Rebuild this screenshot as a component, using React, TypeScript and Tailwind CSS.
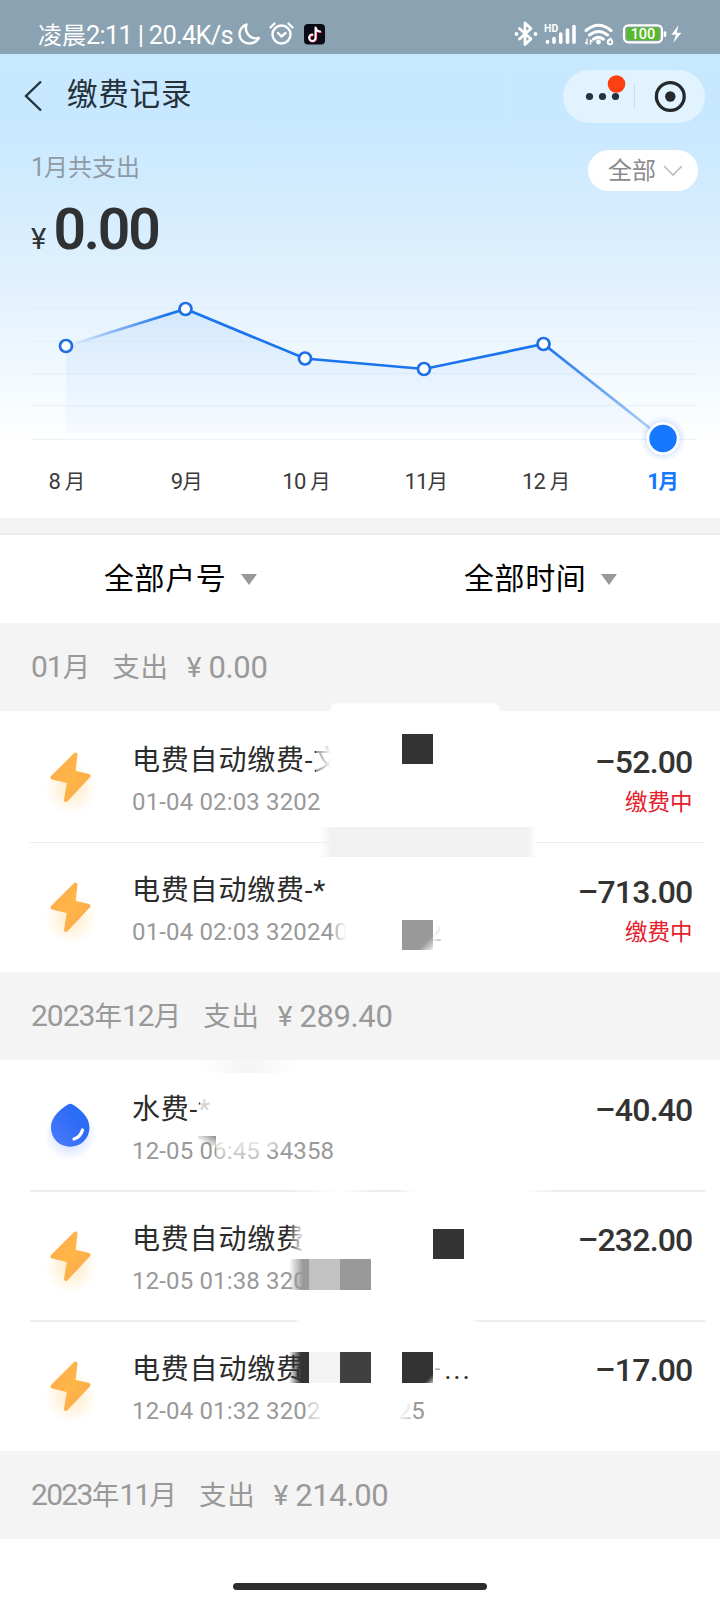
import type { ReactNode } from "react";

const CJK = "font-['Noto_Sans_CJK_SC',sans-serif]";

/** Sets Latin runs in Roboto and Chinese runs in the CJK face. */
function Mixed({ text, latin }: { text: string; latin: string }) {
  const runs = text.match(/[\u4e00-\u9fff]+|[^\u4e00-\u9fff]+/g) ?? [];
  return (
    <>
      {runs.map((run, i) =>
        /[\u4e00-\u9fff]/.test(run) ? (
          <span key={i}>{run}</span>
        ) : (
          <span key={i} className={`font-[Roboto,sans-serif] leading-none ${latin}`}>
            {run}
          </span>
        ),
      )}
    </>
  );
}

function StatusBar() {
  return (
    <div className="flex h-[54px] items-center bg-[#8aa2b1] pt-[14px] pl-[38px] text-white">
      <span className="w-[198px] text-[24px] leading-[30px] whitespace-nowrap">
        <Mixed text="凌晨2:11 | 20.4K/s" latin="text-[25.500px] tracking-[-0.750px]" />
      </span>
      <svg className="h-[26px] w-[94px]" viewBox="236 21 94 26" fill="none" stroke="white" strokeWidth="2.4" strokeLinecap="round" strokeLinejoin="round">
        <path d="M246.500 24.500c-10 3.500-9.500 18.500 3 19c4.500 0 7.500-2.200 9.500-5.500c-9.500 2-15-6-12.500-13.500z" />
        <circle cx="281.500" cy="34.500" r="9" />
        <path d="M278 33l3.500 3.500 4-3.500M270.500 27.500l4-4M292.500 27.500l-4-4" />
        <rect x="304" y="24" width="21" height="20.500" rx="4" fill="#0b0b17" stroke="none" />
        <path d="M315.500 27.500v10.300a3.200 3.200 0 1 1-3.200-3.200M315.500 27.500c.5 2.500 2 3.800 4.500 4" stroke="#f7335a" strokeWidth="2" transform="translate(.7 .6)" />
        <path d="M315.500 27.500v10.300a3.200 3.200 0 1 1-3.200-3.200M315.500 27.500c.5 2.500 2 3.800 4.500 4" strokeWidth="2" />
      </svg>
      <svg className="ml-[183px] h-[28px] w-[172px]" viewBox="513 20 172 28" fill="none" stroke="white" strokeLinecap="round" strokeLinejoin="round">
        <path d="M519.500 28.500l11.500 10.500-6 5.500v-21.500l6 5.500-11.500 10.500" strokeWidth="2.800" />
        <circle cx="516.500" cy="34" r="1.900" fill="white" stroke="none" />
        <circle cx="535.500" cy="34" r="1.900" fill="white" stroke="none" />
        <text x="544" y="31.500" fontSize="10.500" fontWeight="700" fontFamily="Roboto" fill="white" stroke="none">HD</text>
        <path d="M547.500 41.500v.8M554 38.500v3.800M560.700 34v8.300M567.500 30v12.300M574 26.500v15.800" strokeWidth="3.600" />
        <path d="M586 30.500q12.500-10.500 25 0M589.500 35q9-7 18 0M593.500 39.200q5-3.700 10 0" strokeWidth="3" />
        <circle cx="598.500" cy="42" r="2.400" fill="white" stroke="none" />
        <path d="M587 39v5l-1.500-1.500M590.500 44v-4l1.500 1.500" strokeWidth="1.400" />
        <path d="M610.500 38.500q-2.500 2-2.500 3.700" strokeWidth="2" />
        <circle cx="610" cy="42" r="2.300" strokeWidth="1.800" />
        <rect x="624" y="25.300" width="38" height="17" rx="4.500" strokeWidth="2.200" />
        <rect x="626.500" y="27.500" width="33" height="12.700" rx="2" fill="#57b82c" stroke="none" />
        <text x="643" y="39" fontSize="14.500" fontWeight="500" textAnchor="middle" fontFamily="Roboto" fill="white" stroke="none">100</text>
        <path d="M665 32.500v3.200" strokeWidth="2.500" />
        <path d="M678.500 25l-7 9.700h4.500l-3 8.300 8.500-10.300h-4.700z" fill="white" stroke="none" />
      </svg>
    </div>
  );
}

function NavBar() {
  return (
    <div className="flex h-[76px] items-center pl-[22px]">
      <svg className="mt-[7px] h-8 w-6" viewBox="0 0 24 32" fill="none" stroke="#26323a" strokeWidth="2.400">
        <path d="M19 1.500L4 16l15 14.500" />
      </svg>
      <h1 className="ml-[21px] w-[496px] text-[30.600px] leading-[40px] tracking-[0.700px] text-[#26323a]">缴费记录</h1>
      <div className="mt-[8px] flex h-[53px] w-[142px] items-center rounded-full bg-[#e1f3ff]">
        <svg className="h-[53px] w-[142px]" viewBox="563 69.500 142 53">
          <circle cx="589.500" cy="96" r="3.600" fill="#26323a" />
          <circle cx="602.500" cy="96" r="3.600" fill="#26323a" />
          <circle cx="616.500" cy="83.500" r="8.800" fill="#ff4013" />
          <circle cx="615.500" cy="96" r="3.600" fill="#26323a" />
          <path d="M634.500 82v27" stroke="#cfe0ea" />
          <circle cx="670.300" cy="96" r="13.900" fill="none" stroke="#26292c" strokeWidth="3.300" />
          <circle cx="670.300" cy="96" r="5.200" fill="#26292c" />
        </svg>
      </div>
    </div>
  );
}

const points = [
  [66, 346],
  [185.5, 309],
  [305, 358.5],
  [424, 369],
  [543.5, 344],
  [663, 438.5],
];
const months = ["8 月", "9月", "10 月", "11月", "12 月", "1月"];

function Chart() {
  const line = points.map(([x, y]) => `${x},${y}`).join(" ");
  return (
    <>
      <svg className="block h-[173px] w-[720px]" viewBox="0 290 720 173">
        <defs>
          <linearGradient id="stroke" gradientUnits="userSpaceOnUse" x1="66" y1="0" x2="663" y2="0">
            <stop offset="0.01" stopColor="#1a6fe8" stopOpacity="0" />
            <stop offset="0.170" stopColor="#1a74ee" />
            <stop offset="0.800" stopColor="#1a74ee" />
            <stop offset="1" stopColor="#1a74ee" stopOpacity="0.250" />
          </linearGradient>
          <linearGradient id="area" x1="0" y1="0" x2="0" y2="1">
            <stop offset="0" stopColor="#1677ff" stopOpacity="0.085" />
            <stop offset="1" stopColor="#1677ff" stopOpacity="0.025" />
          </linearGradient>
        </defs>
        {[308.5, 341.5, 373.5, 405.5, 439.5].map((y) => (
          <path key={y} d={`M32 ${y}H696`} stroke="#dfe8f0" strokeOpacity="0.550" />
        ))}
        <polygon points="66,433 66,346 185.5,309 305,358.5 424,369 543.5,344 656,433" fill="url(#area)" />
        <polyline points={line} fill="none" stroke="url(#stroke)" strokeWidth="2.700" />
        {points.slice(0, 5).map(([x, y]) => (
          <circle key={x} cx={x} cy={y} r="6" fill="white" stroke="#1f6fe5" strokeWidth="2.700" />
        ))}
        <circle cx="663" cy="438.500" r="22" fill="#1677ff" fillOpacity="0.050" />
        <circle cx="663" cy="438.500" r="19" fill="#1677ff" fillOpacity="0.070" />
        <circle cx="663" cy="438.500" r="16.500" fill="white" />
        <circle cx="663" cy="438.500" r="13.700" fill="#1677ff" />
      </svg>
      <div className="flex h-[55px] w-[720px] pl-[7px] text-[20.500px] leading-[34px] text-[#3a3a3a]">
        {months.map((m, i) => (
          <div key={m} className={i === 5 ? "w-[114px] text-center font-bold text-[#1677ff]" : "w-[119.800px] text-center"}>
            <Mixed text={m} latin={i === 5 ? "text-[22px] font-bold tracking-[-1.500px]" : "text-[22px] tracking-[-0.800px]"} />
          </div>
        ))}
      </div>
    </>
  );
}

function Summary() {
  return (
    <div className="h-[160px]">
      <div className="flex h-[64px] items-start justify-between pr-[22px] pl-[31px]">
        <span className="mt-[18px] text-[24px] leading-[36px] text-[#8f9ba4]">
          <Mixed text="1月共支出" latin="text-[25px] tracking-[-1px]" />
        </span>
        <div className="mt-[20px] flex h-[41px] w-[110px] items-center rounded-full bg-white pl-[20px]">
          <span className="mt-[-3px] text-[24px] leading-[36px] text-[#8a8a8a]">全部</span>
          <svg className="ml-[7px] h-3 w-5" viewBox="0 0 20 12" fill="none" stroke="#bdbdbd" strokeWidth="1.600">
            <path d="M1 1l9 9 9-9" />
          </svg>
        </div>
      </div>
      <div className="flex items-baseline pt-px pl-[31px] font-[Roboto,sans-serif] text-[#2f3133]">
        <span className="w-[22.500px] text-[29px]">¥</span>
        <span className="text-[57px] leading-[69px] font-semibold tracking-[-2.200px]">0.00</span>
      </div>
    </div>
  );
}

function Filter({ label }: { label: string }) {
  return (
    <div className="flex flex-1 items-center pl-[104px]">
      <span className="mt-[-6px] text-[30px] leading-[44px] tracking-[0.600px] text-black">{label}</span>
      <svg className="ml-[14.500px] h-[11px] w-4" viewBox="0 0 16 11">
        <path d="M0 0h16l-8 11z" fill="#999" />
      </svg>
    </div>
  );
}

function GroupHeader({ month, total, narrow }: { month: string; total: string; narrow?: boolean }) {
  return (
    <div className="flex h-[88px] items-center bg-[#f4f4f4] pl-[31px] text-[27.500px] leading-[44px] text-[#999]">
      <span className="-mt-[4px]">
        <Mixed text={month} latin={narrow ? "text-[30px] tracking-[-1.700px]" : "text-[30px] tracking-[-1px]"} />
      </span>
      <span className="-mt-[4px] ml-[22px] tracking-[0.800px]">支出</span>
      <span className="mt-px ml-[18px] font-[Roboto,sans-serif] text-[28px]">¥</span>
      <span className="mt-px ml-[7px] font-[Roboto,sans-serif] text-[31px] tracking-[-0.400px]">{total}</span>
    </div>
  );
}

function Bolt() {
  return (
    <svg className="h-[76px] w-[70px]" viewBox="35 742 70 76">
      <defs>
        <linearGradient id="bolt" x1="0" y1="0" x2="1" y2="1">
          <stop offset="0" stopColor="#ffa94d" />
          <stop offset="0.500" stopColor="#ffb648" />
          <stop offset="1" stopColor="#f9a54c" />
        </linearGradient>
        <radialGradient id="glow">
          <stop offset="0" stopColor="#ffc050" stopOpacity="0.350" />
          <stop offset="1" stopColor="#ffc050" stopOpacity="0" />
        </radialGradient>
      </defs>
      <circle cx="71" cy="788" r="26" fill="url(#glow)" />
      <path d="M75.500 754.500L52.500 777.500 69 781.500 66 800 88.500 776 73.500 772.500z" fill="url(#bolt)" stroke="url(#bolt)" strokeWidth="4" strokeLinejoin="round" />
    </svg>
  );
}

function Drop() {
  return (
    <svg className="h-[76px] w-[70px]" viewBox="35 1091 70 76">
      <defs>
        <linearGradient id="drop" x1="0" y1="1" x2="1" y2="0">
          <stop offset="0" stopColor="#4d7dff" />
          <stop offset="0.600" stopColor="#2f6cf6" />
          <stop offset="1" stopColor="#1f6dfb" />
        </linearGradient>
        <radialGradient id="dropGlow">
          <stop offset="0" stopColor="#4d7dff" stopOpacity="0.350" />
          <stop offset="1" stopColor="#4d7dff" stopOpacity="0" />
        </radialGradient>
      </defs>
      <circle cx="70" cy="1135" r="26" fill="url(#dropGlow)" />
      <path d="M68 1104.500q2.300-1.500 4.600 0C80 1109 89.500 1117 89.500 1127.500a19.300 19.300 0 0 1-38.600 0C51 1117 60.500 1109 68 1104.500z" fill="url(#drop)" />
      <path d="M82.500 1130q-2 7-8.500 9" fill="none" stroke="white" strokeWidth="3.200" strokeLinecap="round" />
    </svg>
  );
}

type RowProps = { icon: ReactNode; title: string; sub: ReactNode; amount: string; pending?: boolean; divider?: string; tail?: ReactNode };

function Row({ icon, title, sub, amount, pending, divider, tail }: RowProps) {
  return (
    <div className="relative flex h-[130px] pl-[35px]">
      <div className="mt-[30px]">{icon}</div>
      <div className="ml-[27px] flex-1 whitespace-nowrap">
        <div className="mt-[25px] h-[42px] text-[28px] leading-[42px] tracking-[0.800px] text-[#2b2b2b]">
          <Mixed text={title} latin="text-[28px]" />
          {tail}
        </div>
        <div className="mt-[7px] font-[Roboto,sans-serif] text-[24px] leading-[32px] tracking-[0.150px] text-[#999]">{sub}</div>
      </div>
      <div className="mr-[27.500px] text-right">
        <div className="mt-[29.500px] font-[Roboto,sans-serif] text-[32px] leading-[40px] font-medium tracking-[-0.800px] text-[#333]">{amount}</div>
        {pending && <div className="mt-[2.500px] text-[22.500px] leading-[32px] text-[#e6202c]">缴费中</div>}
      </div>
      {divider && <div className={`absolute -bottom-px left-[30px] h-[1.500px] w-[675px] ${divider}`} />}
    </div>
  );
}

/** Censoring blocks painted over the private parts of the list. */
function Redactions() {
  return (
    <div className="pointer-events-none absolute inset-0">
      <div className="absolute top-[703px] left-[330px] h-[12px] w-[170px] rounded-t-lg bg-white blur-[1px]" />
      <div className="absolute top-[740px] left-[316px] h-[38px] w-[28px] bg-linear-to-r from-white/50 to-white to-55%" />
      <div className="absolute top-[734px] left-[402px] h-[30px] w-[31px] bg-[#333]" />
      <div className="absolute top-[827px] left-[320px] h-[30px] w-[216px] bg-linear-to-r from-[#f1f1f1]/0 via-[#f1f1f1] via-5% to-[#f1f1f1]" />
      <div className="absolute top-[825px] left-[527px] h-[34px] w-[10px] bg-linear-to-r from-white/0 to-white" />
      <div className="absolute top-[915px] left-[332px] h-[36px] w-[24px] bg-linear-to-r from-white/10 to-white to-60%" />
      <div className="absolute top-[917px] left-[428px] font-[Roboto,sans-serif] text-[24px] leading-[32px] text-[#999]">
        2
        <div className="absolute inset-0 bg-linear-to-br from-white from-45% to-white/10" />
      </div>
      <div className="absolute top-[920px] left-[402px] h-[30px] w-[31px] bg-linear-to-br from-[#999] from-75% to-[#eee]" />
      <div className="absolute top-[1060px] left-[202px] h-[13px] w-[92px] bg-linear-to-r from-white/0 via-[#f5f5f5] to-white/0" />
      <div className="absolute top-[1095px] left-[200px] h-[30px] w-[22px] bg-white/80" />
      <div className="absolute top-[1136px] left-[198px] h-[10px] w-[18px] bg-linear-to-tr from-white/0 from-30% to-[#8a8a8a]" />
      <div className="absolute top-[1137px] left-[216px] h-[28px] w-[46px] bg-linear-to-b from-white/90 to-white/20" />
      <div className="absolute top-[1134px] left-[260px] h-[16px] w-[32px] bg-linear-to-r from-white/90 to-white/0" />
      <div className="absolute top-[1215px] left-[290px] h-[42px] w-[20px] bg-linear-to-r from-white/10 to-white to-70%" />
      <div className="absolute top-[1259px] left-[289px] flex h-[31px]">
        <div className="w-[20px] bg-linear-to-r from-[#999]/0 to-[#9a9a9a] to-70%" />
        <div className="w-[31px] bg-[#c2c2c2]" />
        <div className="w-[31px] bg-[#999]" />
      </div>
      <div className="absolute top-[1229px] left-[433px] h-[30px] w-[31px] bg-[#333]" />
      <div className="absolute top-[1352px] left-[289px] flex h-[31px]">
        <div className="w-[20px] bg-linear-to-r from-[#333]/0 to-[#333] to-60%" />
        <div className="w-[31px] bg-[#f3f3f3]" />
        <div className="w-[31px] bg-[#404040]" />
        <div className="w-[31px] bg-white" />
        <div className="w-[31px] bg-linear-to-br from-[#333] from-85% to-[#bbb]" />
      </div>
      <div className="absolute top-[1394px] left-[306px] h-[32px] w-[16px] bg-linear-to-r from-white/40 to-white/80" />
      <div className="absolute top-[1394px] left-[395px] h-[32px] w-[18px] bg-linear-to-br from-white from-45% to-white/10" />
    </div>
  );
}

export default function App() {
  return (
    <div className={`relative h-[1600px] w-[720px] overflow-hidden bg-white ${CJK}`}>
      <StatusBar />
      <div className="h-[464px] bg-linear-to-b from-[#c8e8ff] from-15% via-[#e1f1fd] via-50% to-white to-84%">
        <NavBar />
        <Summary />
        <Chart />
      </div>
      <div className="h-[17px] border-b-2 border-[#ececec] bg-[#f4f4f4]" />
      <div className="flex h-[88px]">
        <Filter label="全部户号" />
        <Filter label="全部时间" />
      </div>
      <GroupHeader month="01月" total="0.00" />
      <div className="h-[261px] pt-px">
        <Row icon={<Bolt />} title="电费自动缴费-文" sub="01-04 02:03 3202" amount="–52.00" pending divider="bg-[#ececec]" />
        <Row icon={<Bolt />} title="电费自动缴费-*" sub="01-04 02:03 320240" amount="–713.00" pending />
      </div>
      <GroupHeader month="2023年12月" total="289.40" />
      <div className="h-[391px] pt-[0.500px]">
        <Row
          icon={<Drop />}
          title="水费-*"
          sub="12-05 06:45 34358"
          amount="–40.40"
          divider="bg-[linear-gradient(to_right,#ececec_38%,#fff_46%,#ececec_51%,#ececec_54%,#fff_57%,#fff_73%,#ececec_78%)]"
        />
        <Row
          icon={<Bolt />}
          title="电费自动缴费"
          sub="12-05 01:38 320"
          amount="–232.00"
          divider="bg-[linear-gradient(to_right,#ececec_39%,#fff_40%,#fff_65%,#ececec_67%)]"
        />
        <Row
          icon={<Bolt />}
          title="电费自动缴费"
          tail={
            <span className="ml-[130px] font-[Roboto,sans-serif] leading-none">
              <span className="relative -top-[4px] text-[20px] text-[#aaa]">-</span>
              <span className="ml-[3px] tracking-[1.800px]">...</span>
            </span>
          }
          sub={
            <>
              12-04 01:32 3202<span className="ml-[77px]">25</span>
            </>
          }
          amount="–17.00"
        />
      </div>
      <GroupHeader month="2023年11月" total="214.00" narrow />
      <div className="flex justify-center pt-[44px]">
        <div className="h-[7px] w-[254px] rounded-full bg-[#2e2e2e]" />
      </div>
      <Redactions />
    </div>
  );
}
